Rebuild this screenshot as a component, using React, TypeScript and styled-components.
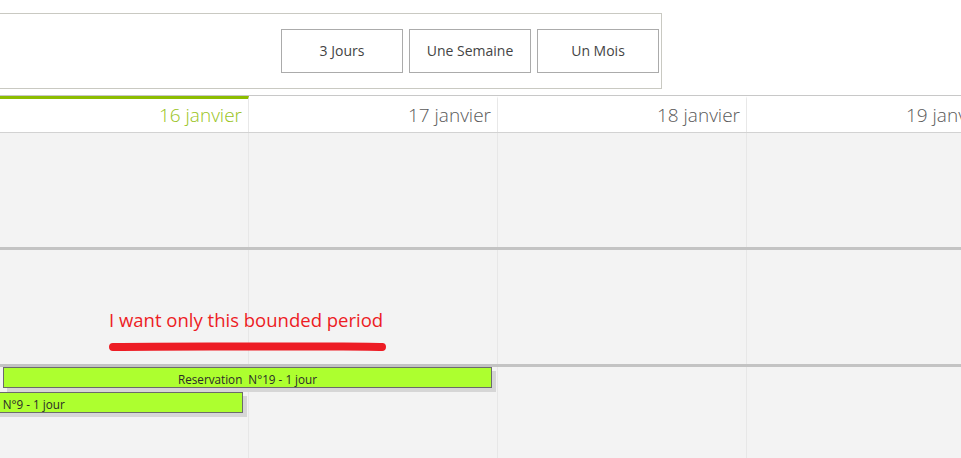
import React from "react";
import styled, { createGlobalStyle } from "styled-components";

const GlobalStyle = createGlobalStyle`
  html, body {
    margin: 0;
    padding: 0;
    background: #ffffff;
    overflow: hidden;
  }
  body {
    font-family: "Open Sans", "Noto Sans", "Liberation Sans", sans-serif;
  }
  * { box-sizing: border-box; }
`;

const COL = 249;

const Page = styled.div`
  position: relative;
  width: 961px;
  height: 458px;
  overflow: hidden;
  padding-top: 13px;
`;

const Toolbar = styled.div`
  width: 662px;
  height: 76px;
  border: 1px solid #c9c9c2;
  border-left: none;
  background: #fff;
  display: flex;
  justify-content: flex-end;
  align-items: center;
  gap: 6px;
  padding-right: 2px;
`;

const ViewButton = styled.button`
  width: 122px;
  height: 44px;
  border: 1px solid #ababab;
  background: #fff;
  color: #444444;
  font-family: "Open Sans", "Noto Sans", sans-serif;
  font-size: 14px;
  padding: 0 0 1px;
  cursor: pointer;
`;

const Calendar = styled.div`
  margin-top: 6px;
  margin-left: -${COL}px;
  border-top: 1px solid #c8c8c8;
`;

const HeaderRow = styled.div`
  display: grid;
  grid-template-columns: repeat(5, ${COL}px);
  border-bottom: 1px solid #d2d2d2;
`;

const HeaderCell = styled.div<{ $today?: boolean }>`
  height: 36px;
  background: #fff;
  border-right: 1px solid #e8e8e8;
  border-top: 3px solid ${(p) => (p.$today ? "#8cbd00" : "transparent")};
  text-align: right;
  padding-right: 6px;
  font-family: "Open Sans", "Noto Sans", sans-serif;
  font-weight: 300;
  font-size: 19px;
  line-height: 32px;
  color: ${(p) => (p.$today ? "#99c31a" : "#5a5a5a")};
  white-space: nowrap;
  overflow: hidden;
`;

const Row = styled.div<{ $sep?: boolean }>`
  position: relative;
  display: grid;
  grid-template-columns: repeat(5, ${COL}px);
  grid-template-rows: auto auto 1fr;
  height: ${(p) => (p.$sep ? 117 : 114)}px;
  border-top: ${(p) => (p.$sep ? "3px solid #c3c3c3" : "none")};
  background: #f3f3f3;
`;

const DayCell = styled.div<{ $col: number }>`
  grid-column: ${(p) => p.$col};
  grid-row: 1 / -1;
  border-right: 1px solid #e7e7e7;
`;

const EventBar = styled.div<{ $from: number; $to: number; $row: number }>`
  grid-column: ${(p) => p.$from} / ${(p) => p.$to};
  grid-row: ${(p) => p.$row};
  z-index: 1;
  height: 21px;
  margin: 0 6px 4px 3px;
  background: #adff2f;
  border: 1px solid #6b6b6b;
  box-shadow: 4px 4px 0 0 #d6d6d6;
  text-align: center;
  font-family: "Open Sans", "Noto Sans", sans-serif;
  font-size: 11.7px;
  line-height: 19px;
  padding-top: 2px;
  color: #2a2a2a;
  white-space: pre;
  overflow: hidden;
`;

const Annotation = styled.div`
  position: absolute;
  left: 109px;
  top: 307px;
  font-family: "Open Sans", "Noto Sans", sans-serif;
  font-size: 18.5px;
  line-height: normal;
  color: #ed1c24;
  white-space: nowrap;
`;

const Marker = styled.svg`
  position: absolute;
  left: 108px;
  top: 341px;
`;

const days = ["15 janvier", "16 janvier", "17 janvier", "18 janvier", "19 janvier"];

export default function App() {
  return (
    <>
      <GlobalStyle />
      <Page>
        <Toolbar>
          <ViewButton>3 Jours</ViewButton>
          <ViewButton>Une Semaine</ViewButton>
          <ViewButton>Un Mois</ViewButton>
        </Toolbar>
        <Calendar>
          <HeaderRow>
            {days.map((d, i) => (
              <HeaderCell key={d} $today={i === 1}>
                {d}
              </HeaderCell>
            ))}
          </HeaderRow>
          <Row>
            {days.map((d, i) => (
              <DayCell key={d} $col={i + 1} />
            ))}
          </Row>
          <Row $sep>
            {days.map((d, i) => (
              <DayCell key={d} $col={i + 1} />
            ))}
          </Row>
          <Row $sep>
            {days.map((d, i) => (
              <DayCell key={d} $col={i + 1} />
            ))}
            <EventBar $from={2} $to={4} $row={1}>
              {"Reservation  N°19 - 1 jour"}
            </EventBar>
            <EventBar $from={1} $to={3} $row={2}>
              {"Reservation  N°9 - 1 jour"}
            </EventBar>
          </Row>
        </Calendar>
        <Annotation>I want only this bounded period</Annotation>
        <Marker width="280" height="12" viewBox="0 0 280 12">
          <path
            d="M5 6 C 60 5, 120 5.5, 180 5.5 S 260 5, 274 6"
            stroke="#ed1c24"
            strokeWidth="8"
            strokeLinecap="round"
            fill="none"
          />
        </Marker>
      </Page>
    </>
  );
}
